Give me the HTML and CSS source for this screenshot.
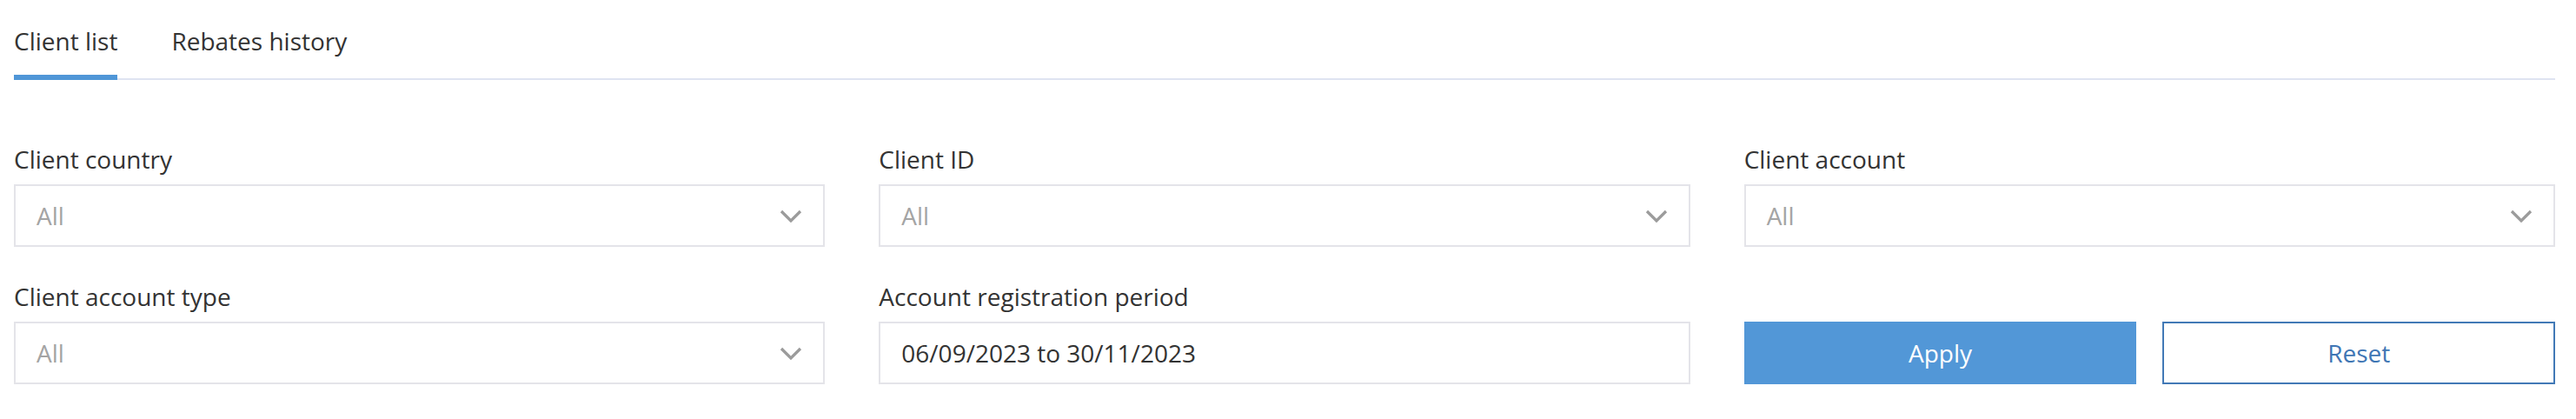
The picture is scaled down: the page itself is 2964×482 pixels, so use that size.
FILE: index.html
```html
<!DOCTYPE html>
<html lang="en">
<head>
<meta charset="utf-8">
<title>Client list</title>
<link rel="stylesheet" href="styles.css">
</head>
<body>
<div class="page">
  <nav class="tabs">
    <a class="tab active">Client list</a>
    <a class="tab">Rebates history</a>
  </nav>
  <form class="filters">
    <div class="field">
      <label class="label">Client country</label>
      <div class="select"><span class="placeholder">All</span>
        <svg class="chev" viewBox="0 0 26 16" width="26" height="16"><path d="M2 2 L13 13 L24 2" fill="none" stroke="#9b9b9b" stroke-width="3.2"/></svg>
      </div>
    </div>
    <div class="field">
      <label class="label">Client ID</label>
      <div class="select"><span class="placeholder">All</span>
        <svg class="chev" viewBox="0 0 26 16" width="26" height="16"><path d="M2 2 L13 13 L24 2" fill="none" stroke="#9b9b9b" stroke-width="3.2"/></svg>
      </div>
    </div>
    <div class="field">
      <label class="label">Client account</label>
      <div class="select"><span class="placeholder">All</span>
        <svg class="chev" viewBox="0 0 26 16" width="26" height="16"><path d="M2 2 L13 13 L24 2" fill="none" stroke="#9b9b9b" stroke-width="3.2"/></svg>
      </div>
    </div>
    <div class="field">
      <label class="label">Client account type</label>
      <div class="select"><span class="placeholder">All</span>
        <svg class="chev" viewBox="0 0 26 16" width="26" height="16"><path d="M2 2 L13 13 L24 2" fill="none" stroke="#9b9b9b" stroke-width="3.2"/></svg>
      </div>
    </div>
    <div class="field">
      <label class="label">Account registration period</label>
      <div class="select"><span class="value">06/09/2023 to 30/11/2023</span></div>
    </div>
    <div class="actions">
      <button type="button" class="btn btn-primary">Apply</button>
      <button type="button" class="btn btn-outline">Reset</button>
    </div>
  </form>
</div>
</body>
</html>
```

FILE: styles.css
```css
html, body {
  margin: 0;
  padding: 0;
  background: #ffffff;
}

body {
  font-family: "Open Sans", "Liberation Sans", sans-serif;
  font-size: 28px;
  line-height: 38px;
  color: #333333;
}

.page {
  padding: 28px 24px 0 16px;
}

.tabs {
  display: flex;
  gap: 62px;
  border-bottom: 2px solid #dfe4f1;
}

.tab {
  display: block;
  padding-bottom: 20px;
  margin-bottom: -2px;
  border-bottom: 6px solid transparent;
  color: #333333;
  cursor: pointer;
}

.tab.active {
  border-bottom-color: #4f96d7;
}

.filters {
  display: grid;
  grid-template-columns: repeat(3, 1fr);
  column-gap: 62px;
  row-gap: 38px;
  margin-top: 72px;
}

.field {
  display: flex;
  flex-direction: column;
}

.label {
  display: block;
  margin-bottom: 10px;
  color: #333333;
}

.select {
  box-sizing: border-box;
  height: 72px;
  border: 2px solid #e4e4e9;
  padding: 0 24px 0 24px;
  display: flex;
  align-items: center;
  justify-content: space-between;
  background: #ffffff;
}

.placeholder {
  color: #a4a4a4;
}

.value {
  color: #333333;
}

.chev {
  display: block;
  margin-top: 2px;
}

.actions {
  align-self: end;
  display: flex;
  gap: 30px;
}

.btn {
  flex: 1;
  box-sizing: border-box;
  height: 72px;
  font-family: inherit;
  font-size: 28px;
  line-height: 38px;
  border-radius: 0;
  cursor: pointer;
  padding: 0;
}

.btn-primary {
  background: #5297d7;
  border: 2px solid #5297d7;
  color: #ffffff;
}

.btn-outline {
  background: #ffffff;
  border: 2px solid #4279b6;
  color: #3f76b4;
}
```
